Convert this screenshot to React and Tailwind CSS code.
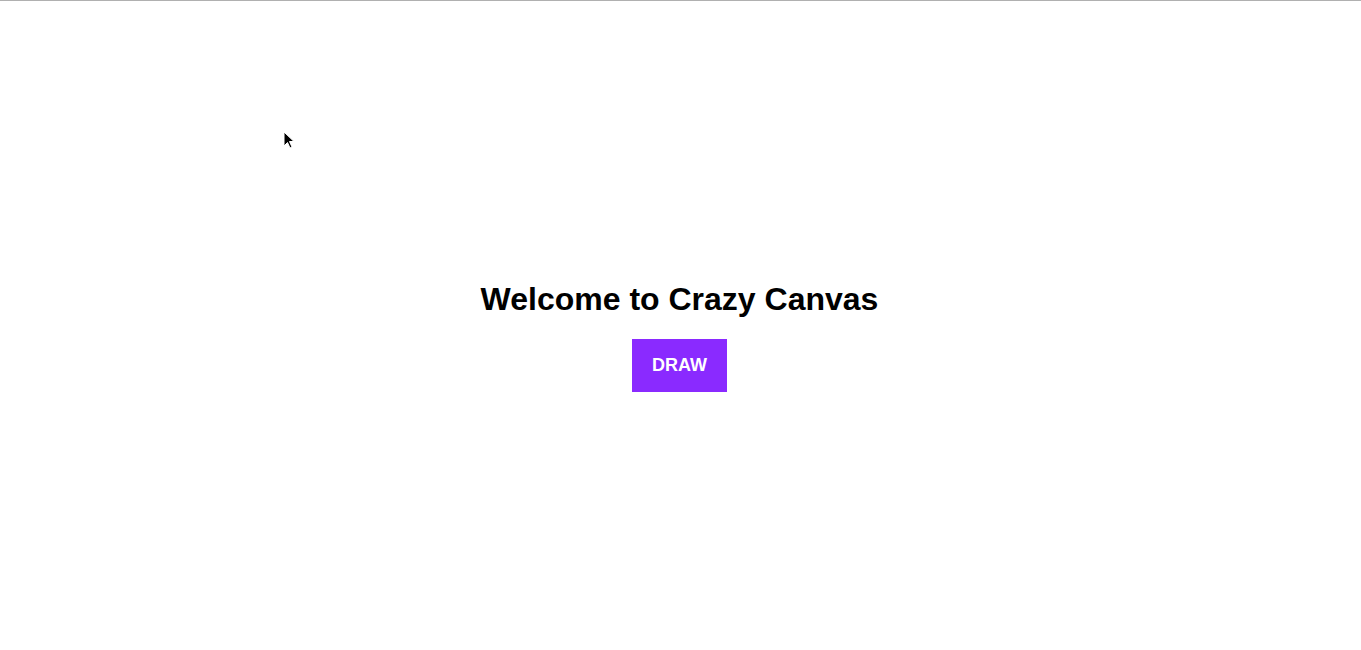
export default function App() {
  return (
    <div className="relative h-[650px] w-full bg-white border-t border-[#b0b0b0] overflow-hidden" style={{ fontFamily: '"Liberation Sans", Arial, sans-serif' }}>
      <div className="flex flex-col items-center pt-[280px] pr-[2px]">
        <h1 className="text-[32px] leading-[37px] font-bold text-black">Welcome to Crazy Canvas</h1>
        <button className="mt-[21px] w-[95px] h-[53px] bg-[#8a2aff] text-white text-[18px] font-bold flex items-center justify-center">
          DRAW
        </button>
      </div>
      <svg className="absolute left-[283px] top-[130px]" width="14" height="20" viewBox="0 0 14 20">
        <path d="M1 1 L1 15 L4.5 11.5 L7 17 L9 16 L6.5 10.5 L11 10.5 Z" fill="#000" stroke="#fff" strokeWidth="1" />
      </svg>
    </div>
  );
}
